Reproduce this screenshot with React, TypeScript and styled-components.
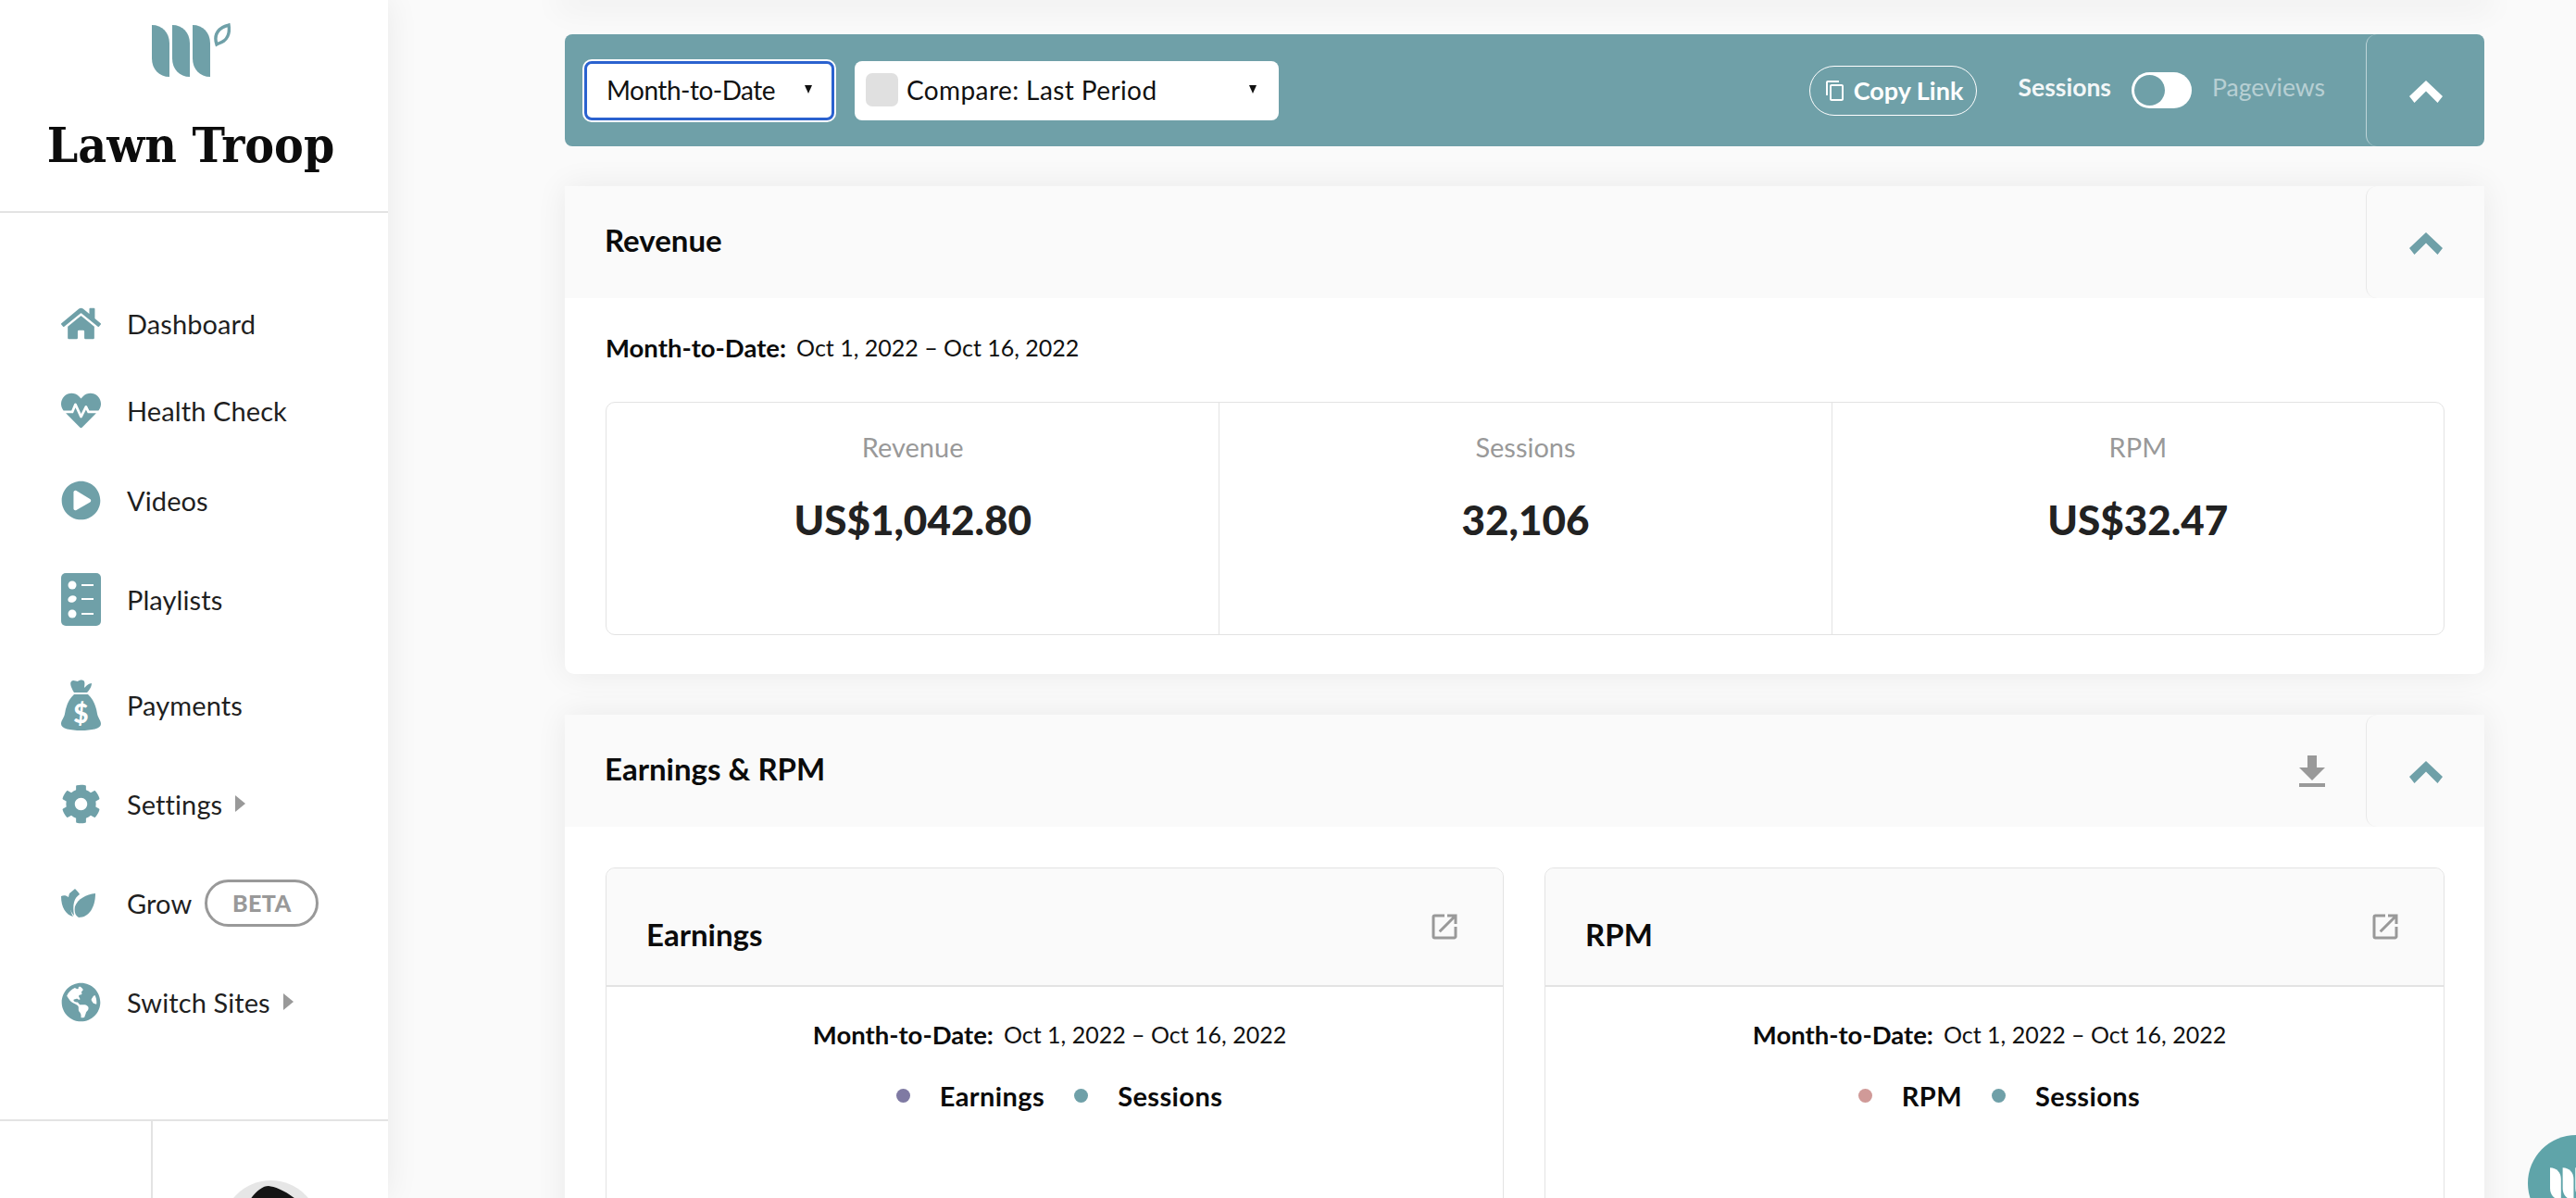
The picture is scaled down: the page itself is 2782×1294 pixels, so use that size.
import React from "react";
import styled, { createGlobalStyle } from "styled-components";
import { FaHome, FaHeartbeat, FaPlayCircle, FaCog, FaGlobeAmericas } from "react-icons/fa";
import { MdOpenInNew, MdOutlineContentCopy } from "react-icons/md";

const teal = "#6fa0a8";
const line = "#e3e3e3";

const GlobalStyle = createGlobalStyle`
  html, body {
    margin: 0;
    height: 100%;
    overflow: hidden;
    background: #fafafa;
    font-family: Lato, "Open Sans", sans-serif;
    color: #1f1f1f;
  }
  * { box-sizing: border-box; }
`;

const Page = styled.div`
  display: flex;
  height: 1294px;
  overflow: hidden;
  background: #fafafa;
`;

const Sidebar = styled.aside`
  position: relative;
  z-index: 1;
  flex: 0 0 419px;
  display: flex;
  flex-direction: column;
  height: 1294px;
  background: #fff;
  box-shadow: 0 0 34px rgba(0, 0, 0, 0.07);
`;

const Brand = styled.div`
  height: 230px;
  display: flex;
  flex-direction: column;
  align-items: center;
  padding: 25px 7px 0 0;
  border-bottom: 2px solid ${line};
  color: ${teal};
`;

const BrandName = styled.div`
  margin-top: 38px;
  font-family: "DejaVu Serif Condensed", "DejaVu Serif", serif;
  font-stretch: condensed;
  font-weight: 700;
  font-size: 53px;
  line-height: 70px;
  color: #0c0c0c;
  white-space: nowrap;
`;

const Nav = styled.nav`
  flex: 1;
  padding: 72px 0 0 66px;
`;

const NavItem = styled.a<{ $h: number }>`
  display: flex;
  align-items: center;
  height: ${(p) => p.$h}px;
  font-size: 29px;
  letter-spacing: 0.1px;
  color: #1f1f1f;
`;

const IconBox = styled.span`
  flex: 0 0 43px;
  display: flex;
  justify-content: flex-start;
  align-items: center;
  margin-right: 28px;
  color: ${teal};
`;

const Arrow = styled.span`
  width: 0;
  height: 0;
  margin-left: 14px;
  border-style: solid;
  border-width: 9px 0 9px 11px;
  border-color: transparent transparent transparent #999;
`;

const BetaPill = styled.span`
  width: 123px;
  height: 51px;
  margin-left: 14px;
  display: flex;
  align-items: center;
  justify-content: center;
  border: 3px solid #999;
  border-radius: 26px;
  color: #999;
  font-weight: 900;
  font-size: 25px;
  letter-spacing: 0.5px;
`;

const SideFooter = styled.div`
  display: grid;
  grid-template-columns: 163px 1fr;
  height: 85px;
  border-top: 2px solid ${line};
`;

const FooterCell = styled.div`
  display: flex;
  justify-content: center;
  padding-top: 64px;
  border-left: ${(p: { $divider?: boolean }) => (p.$divider ? `2px solid ${line}` : "none")};
`;

const Main = styled.main`
  flex: 1;
  min-width: 0;
  padding: 0 99px 0 191px;
`;

const ScrollEdge = styled.div`
  height: 0;
  margin-bottom: 37px;
  box-shadow: 0 0 34px 8px rgba(0, 0, 0, 0.07);
`;

const Toolbar = styled.div`
  display: flex;
  align-items: center;
  height: 121px;
  padding-left: 21px;
  margin-bottom: 43px;
  background: ${teal};
  border-radius: 8px;
`;

const Select = styled.div<{ $w: number; $focus?: boolean }>`
  display: flex;
  align-items: center;
  width: ${(p) => p.$w}px;
  height: 64px;
  margin-right: 22px;
  padding: 0 ${(p) => (p.$focus ? 21 : 24)}px 2px ${(p) => (p.$focus ? 21 : 12)}px;
  background: #fff;
  border-radius: 8px;
  font-size: 28px;
  letter-spacing: ${(p) => (p.$focus ? "-0.5px" : "0.4px")};
  color: #111;
  ${(p) => p.$focus && "border: 3px solid #2b62cf; box-shadow: 0 0 0 2px #fff;"}
`;

const Swatch = styled.span`
  width: 35px;
  height: 36px;
  margin-right: 9px;
  background: #e0e0e0;
  border-radius: 7px;
`;

const Caret = styled.span`
  width: 0;
  height: 0;
  margin-left: auto;
  border-style: solid;
  border-width: 9px 4.5px 0 4.5px;
  border-color: #111 transparent transparent transparent;
`;

const ToolbarRight = styled.div`
  display: flex;
  align-items: center;
  height: 100%;
  margin-left: auto;
  color: #fff;
`;

const CopyLink = styled.button`
  display: flex;
  align-items: center;
  justify-content: center;
  gap: 8px;
  width: 181px;
  height: 54px;
  margin-right: 44px;
  padding: 0;
  background: transparent;
  border: 1.5px solid #fff;
  border-radius: 27px;
  color: #fff;
  font-family: inherit;
  font-weight: 700;
  font-size: 27px;
`;

const MetricLabel = styled.span<{ $dim?: boolean }>`
  margin-top: -7px;
  font-size: 26.5px;
  font-weight: ${(p) => (p.$dim ? 400 : 700)};
  opacity: ${(p) => (p.$dim ? 0.5 : 0.92)};
`;

const Toggle = styled.span`
  display: flex;
  align-items: center;
  width: 65px;
  height: 39px;
  margin: 0 22px;
  padding: 0 3px;
  background: #fff;
  border-radius: 20px;
`;

const Knob = styled.span`
  width: 33px;
  height: 33px;
  background: ${teal};
  border-radius: 50%;
`;

const Collapse = styled.div<{ $light?: boolean }>`
  flex: 0 0 128px;
  display: flex;
  align-items: center;
  justify-content: center;
  align-self: stretch;
  height: ${(p) => (p.$light ? "121px" : "100%")};
  margin-left: 44px;
  padding-top: 3px;
  border-left: 1.5px solid ${(p) => (p.$light ? "#e8e8e8" : "rgba(255, 255, 255, 0.55)")};
  border-radius: 12px 0 0 12px;
  color: ${(p) => (p.$light ? teal : "#fff")};
`;

const Panel = styled.section`
  margin-bottom: 44px;
  background: #fff;
  border-radius: 0 0 10px 10px;
  box-shadow: 0 0 34px rgba(0, 0, 0, 0.07);
`;

const PanelHeader = styled.header`
  display: flex;
  align-items: center;
  height: 121px;
  padding-left: 43px;
  background: #fafafa;
`;

const PanelTitle = styled.h2`
  margin: -6px 0 0;
  font-size: 33px;
  font-weight: 700;
  color: #0b0b0b;
`;

const DownloadWrap = styled.span`
  display: flex;
  margin-left: auto;
`;

const PanelBody = styled.div`
  padding: 38px 43px 42px 44px;
`;

const DateLine = styled.div<{ $center?: boolean }>`
  display: flex;
  gap: 11px;
  align-items: center;
  justify-content: ${(p) => (p.$center ? "center" : "flex-start")};
  padding-right: ${(p) => (p.$center ? 11 : 0)}px;
  height: 30px;
  font-size: 25px;
  color: #111;
`;

const DateLabel = styled.strong`
  font-weight: 700;
  font-size: 27.5px;
  color: #0b0b0b;
`;

const StatGrid = styled.div`
  display: grid;
  grid-template-columns: repeat(3, 1fr);
  height: 252px;
  margin-top: 44px;
  border: 1.5px solid ${line};
  border-radius: 10px;
`;

const StatCell = styled.div`
  padding-top: 33px;
  text-align: center;
  &:not(:first-child) {
    border-left: 1.5px solid ${line};
  }
`;

const StatLabel = styled.div`
  font-size: 29px;
  line-height: 30px;
  color: #999;
`;

const StatValue = styled.div`
  margin-top: 35px;
  font-size: 44px;
  line-height: 56px;
  font-weight: 900;
  color: #222;
`;

const ChartGrid = styled.div`
  display: grid;
  grid-template-columns: 970px 972px;
  gap: 44px;
`;

const ChartCard = styled.div`
  height: 620px;
  margin-top: 6px;
  border: 1.5px solid ${line};
  border-radius: 10px;
`;

const ChartHeader = styled.div`
  display: flex;
  align-items: flex-start;
  justify-content: space-between;
  height: 128px;
  padding: 45px 45px 0 43px;
  background: #fafafa;
  border-bottom: 2px solid ${line};
  border-radius: 10px 10px 0 0;
  color: #999;
`;

const ChartTitle = styled(PanelTitle)`
  margin-top: 11px;
  line-height: 30px;
`;

const ChartBody = styled.div`
  padding-top: 36px;
`;

const Legend = styled.div`
  display: flex;
  justify-content: center;
  align-items: center;
  gap: 32px;
  margin-top: 36px;
  padding-left: 10px;
  height: 30px;
  font-size: 29px;
  letter-spacing: 0.4px;
  font-weight: 700;
  color: #0b0b0b;
`;

const Dot = styled.span<{ $color: string }>`
  width: 15px;
  height: 15px;
  background: ${(p) => p.$color};
  border-radius: 50%;
`;

const ChatBubble = styled.div`
  position: fixed;
  z-index: 2;
  top: 1226px;
  left: 2730px;
  width: 104px;
  height: 104px;
  padding: 34px 0 0 24px;
  background: #5fa4a9;
  border-radius: 50%;
  color: #fff;
`;

const Logo = ({ h }: { h: number }) => (
  <svg width={(h * 85) / 58} height={h} viewBox="0 0 85 58" fill="currentColor">
    <path d="M0 2C11 2 19 10 19 22V58C8 58 0 50 0 38Z" />
    <path d="M22 2C33 2 41 10 41 22V58C30 58 22 50 22 38Z" />
    <path d="M44 2C55 2 63 10 63 22V58C52 58 44 50 44 38Z" />
    <path
      d="M83 2C84 8 83 15 78 19C75 21 72 22 70 23C68 17 69 11 73 7C76 4 80 3 83 2Z"
      fill="none"
      stroke="currentColor"
      strokeWidth="3.4"
    />
  </svg>
);

const ListIcon = () => (
  <svg width="43" height="57" viewBox="0 0 43 57">
    <rect width="43" height="57" rx="5" fill={teal} />
    <g fill="#fff">
      <circle cx="12" cy="13" r="4.5" />
      <ellipse cx="12" cy="28" rx="4.8" ry="3.6" transform="rotate(-20 12 28)" />
      <circle cx="12" cy="44" r="4.5" />
      <rect x="22" y="12" width="13" height="2" />
      <rect x="22" y="27" width="13" height="2" />
      <rect x="22" y="43" width="13" height="2" />
    </g>
  </svg>
);

const BagIcon = () => (
  <svg width="43" height="55" viewBox="0 0 43 55" fill={teal}>
    <path d="M14 14C11 9 9 4 11 2C13 0 16 2 18 2C20 0 24 0 25 2C26 4 25 7 25 9C27 7 30 4 33 4C33 8 30 12 28 14Z" />
    <path d="M14 16H29C35 21 38 30 39 37C40 42 43 44 43 48C43 53 33 55 21.5 55C10 55 0 53 0 48C0 44 3 42 4 37C5 30 8 21 14 16Z" />
    <text x="21.5" y="47" textAnchor="middle" fontSize="28" fontWeight="900" fontFamily="Lato, sans-serif" fill="#fff">
      $
    </text>
  </svg>
);

const LeavesIcon = () => (
  <svg width="37" height="31" viewBox="0 0 37 31" fill={teal}>
    <path d="M0 8C5 6 9 9 11 13C9 18 10 25 13 30C5 28 0 20 0 8Z" />
    <path d="M9 5L15 0C17 2 19 4 20 6C14 10 12 17 14 29C9 24 6 13 9 5Z" />
    <path d="M37 5C37 20 30 31 19 31C15 29 14 24 15 19C18 11 27 6 37 5Z" />
  </svg>
);

const Chevron = () => (
  <svg width="36" height="24" viewBox="0 0 36 24" fill="currentColor">
    <path d="M18 0L36 17L30.5 24L18 11.5L5.5 24L0 17Z" />
  </svg>
);

const DownloadIcon = () => (
  <svg width="28" height="34" viewBox="0 0 28 34" fill="#999">
    <rect x="9" y="0" width="10" height="14" />
    <path d="M0 13H28L14 27Z" />
    <rect x="0" y="30" width="28" height="4" />
  </svg>
);

const Avatar = () => (
  <svg width="105" height="105" viewBox="0 0 105 105">
    <circle cx="52.5" cy="52.5" r="52.5" fill="#e6e6e6" />
    <path d="M25 30C32 15 42 6 50 6C58 7 72 12 88 28L88 70H18Z" fill="#141414" />
  </svg>
);

const navItems = [
  { label: "Dashboard", h: 94, icon: <FaHome size={43} /> },
  { label: "Health Check", h: 94, icon: <FaHeartbeat size={43} /> },
  { label: "Videos", h: 100, icon: <FaPlayCircle size={43} /> },
  { label: "Playlists", h: 114, icon: <ListIcon /> },
  { label: "Payments", h: 114, icon: <BagIcon /> },
  { label: "Settings", h: 100, icon: <FaCog size={43} />, arrow: true },
  { label: "Grow", h: 114, icon: <LeavesIcon />, beta: true },
  { label: "Switch Sites", h: 100, icon: <FaGlobeAmericas size={43} />, arrow: true },
];

const stats = [
  { label: "Revenue", value: "US$1,042.80" },
  { label: "Sessions", value: "32,106" },
  { label: "RPM", value: "US$32.47" },
];

const charts = [
  { title: "Earnings", color: "#7f7aa3" },
  { title: "RPM", color: "#d09a98" },
];

const range = "Oct 1, 2022 – Oct 16, 2022";

export default function App() {
  return (
    <Page>
      <GlobalStyle />
      <Sidebar>
        <Brand>
          <Logo h={58} />
          <BrandName>Lawn Troop</BrandName>
        </Brand>
        <Nav>
          {navItems.map((item) => (
            <NavItem key={item.label} $h={item.h}>
              <IconBox>{item.icon}</IconBox>
              {item.label}
              {item.arrow && <Arrow />}
              {item.beta && <BetaPill>BETA</BetaPill>}
            </NavItem>
          ))}
        </Nav>
        <SideFooter>
          <FooterCell />
          <FooterCell $divider>
            <Avatar />
          </FooterCell>
        </SideFooter>
      </Sidebar>

      <Main>
        <ScrollEdge />
        <Toolbar>
          <Select $w={270} $focus>
            Month-to-Date
            <Caret />
          </Select>
          <Select $w={458}>
            <Swatch />
            Compare: Last Period
            <Caret />
          </Select>
          <ToolbarRight>
            <CopyLink>
              <MdOutlineContentCopy size={24} />
              Copy Link
            </CopyLink>
            <MetricLabel>Sessions</MetricLabel>
            <Toggle>
              <Knob />
            </Toggle>
            <MetricLabel $dim>Pageviews</MetricLabel>
            <Collapse>
              <Chevron />
            </Collapse>
          </ToolbarRight>
        </Toolbar>

        <Panel>
          <PanelHeader>
            <PanelTitle>Revenue</PanelTitle>
            <DownloadWrap />
            <Collapse $light>
              <Chevron />
            </Collapse>
          </PanelHeader>
          <PanelBody>
            <DateLine>
              <DateLabel>Month-to-Date:</DateLabel>
              {range}
            </DateLine>
            <StatGrid>
              {stats.map((s) => (
                <StatCell key={s.label}>
                  <StatLabel>{s.label}</StatLabel>
                  <StatValue>{s.value}</StatValue>
                </StatCell>
              ))}
            </StatGrid>
          </PanelBody>
        </Panel>

        <Panel>
          <PanelHeader>
            <PanelTitle>Earnings &amp; RPM</PanelTitle>
            <DownloadWrap>
              <DownloadIcon />
            </DownloadWrap>
            <Collapse $light>
              <Chevron />
            </Collapse>
          </PanelHeader>
          <PanelBody>
            <ChartGrid>
              {charts.map((c) => (
                <ChartCard key={c.title}>
                  <ChartHeader>
                    <ChartTitle>{c.title}</ChartTitle>
                    <MdOpenInNew size={36} />
                  </ChartHeader>
                  <ChartBody>
                    <DateLine $center>
                      <DateLabel>Month-to-Date:</DateLabel>
                      {range}
                    </DateLine>
                    <Legend>
                      <Dot $color={c.color} />
                      <span>{c.title}</span>
                      <Dot $color="#6fa0a8" />
                      <span>Sessions</span>
                    </Legend>
                  </ChartBody>
                </ChartCard>
              ))}
            </ChartGrid>
          </PanelBody>
        </Panel>
      </Main>

      <ChatBubble>
        <Logo h={36} />
      </ChatBubble>
    </Page>
  );
}
